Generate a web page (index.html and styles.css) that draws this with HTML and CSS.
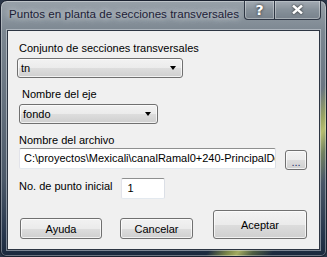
FILE: index.html
```html
<!DOCTYPE html>
<html lang="es">
<head>
    <meta charset="UTF-8">
    <title>Puntos en planta de secciones transversales</title>
    <link rel="stylesheet" href="styles.css">
</head>
<body>
    <div class="window">
        <div class="titlebar">
            <span class="title">Puntos en planta de secciones transversales</span>
            <div class="caption-btns">
                <span class="cap-btn help">?</span>
                <span class="cap-btn close">
                    <svg width="11" height="9" viewBox="0 0 11 9"><path d="M1 0.5 L10 8.5 M10 0.5 L1 8.5" stroke="#fff" stroke-width="2.4"/></svg>
                </span>
            </div>
        </div>

        <div class="client">
            <label class="lbl lbl-set">Conjunto de secciones transversales</label>
            <div class="combo combo-set">
                <span>tn</span>
                <span class="arrow"></span>
            </div>

            <label class="lbl lbl-axis">Nombre del eje</label>
            <div class="combo combo-axis">
                <span>fondo</span>
                <span class="arrow"></span>
            </div>

            <label class="lbl lbl-file">Nombre del archivo</label>
            <div class="file-row">
                <div class="field field-file">C:\proyectos\Mexicali\canalRamal0+240-PrincipalDe</div>
                <button class="btn btn-browse">...</button>
            </div>

            <div class="start-row">
                <label class="lbl lbl-start">No. de punto inicial</label>
                <div class="field field-start">1</div>
            </div>

            <div class="actions">
                <button class="btn btn-help">Ayuda</button>
                <button class="btn btn-cancel">Cancelar</button>
                <button class="btn btn-ok">Aceptar</button>
            </div>
        </div>
    </div>
</body>
</html>
```

FILE: styles.css
```css
* {
    margin: 0;
    padding: 0;
    box-sizing: border-box;
}

body {
    width: 327px;
    height: 257px;
    overflow: hidden;
    background: #2a3648;
    font-family: "Liberation Sans", Arial, sans-serif;
    font-size: 11px;
    color: #000;
}

.window {
    position: relative;
    width: 327px;
    height: 257px;
    border: 1px solid #1b2230;
    border-radius: 7px 7px 6px 6px;
    padding: 0 6px 6px 6px;
    display: flex;
    flex-direction: column;
    overflow: hidden;
    background:
        linear-gradient(125deg, transparent 0%, transparent 76%, rgba(200, 210, 80, 0.55) 80%, rgba(220, 225, 110, 0.7) 82%, rgba(170, 190, 70, 0.35) 85%, transparent 89%),
        linear-gradient(180deg, #98a1a9 0%, #7c8791 12%, #65717e 40%, #4b5868 70%, #26354b 92%, #1c2a3e 100%);
    box-shadow: inset 0 0 0 1px rgba(255, 255, 255, 0.35);
}

.titlebar {
    height: 28px;
    display: flex;
    align-items: flex-start;
    justify-content: space-between;
}

.title {
    margin-top: 6px;
    padding-left: 2px;
    font-size: 11.6px;
    color: #1c2036;
    white-space: nowrap;
    text-shadow: 0 0 6px rgba(230, 235, 240, 0.9), 0 0 10px rgba(230, 235, 240, 0.6);
}

.caption-btns {
    display: flex;
    margin-top: -1px;
    margin-right: -1px;
}

.cap-btn {
    height: 20px;
    display: flex;
    align-items: center;
    justify-content: center;
    border: 1px solid rgba(30, 38, 52, 0.85);
    border-top: none;
    background: linear-gradient(180deg, rgba(180, 188, 196, 0.45) 0%, rgba(120, 130, 140, 0.35) 50%, rgba(90, 100, 112, 0.35) 100%);
    box-shadow: inset 0 0 0 1px rgba(255, 255, 255, 0.35);
    color: #fff;
    font-family: "DejaVu Sans", sans-serif;
    font-weight: bold;
    font-size: 14px;
    text-shadow: 0 0 3px #222;
}

.help {
    width: 30px;
    border-radius: 0 0 0 4px;
    border-right: none;
}

.close {
    width: 47px;
    border-radius: 0 0 4px 0;
}

.close svg {
    filter: drop-shadow(0 0 1px #222);
}

.client {
    flex: 1;
    margin-top: 1px;
    background: #f0f0f0;
    border: 1px solid #2d3542;
    box-shadow: 0 0 0 1px rgba(220, 226, 232, 0.5);
    padding: 11px 0 0 0;
    display: flex;
    flex-direction: column;
    align-items: flex-start;
}

.lbl {
    display: block;
    line-height: 13px;
    white-space: nowrap;
}

.lbl-set {
    margin-left: 11px;
}

.combo {
    height: 20px;
    display: flex;
    align-items: center;
    justify-content: space-between;
    padding: 0 6px 0 3px;
    border: 1px solid #707070;
    border-radius: 3px;
    background: linear-gradient(180deg, #f2f2f2 0%, #ebebeb 50%, #dddddd 51%, #cfcfcf 100%);
    box-shadow: inset 0 0 0 1px rgba(255, 255, 255, 0.7);
}

.arrow {
    width: 0;
    height: 0;
    border-left: 3.5px solid transparent;
    border-right: 3.5px solid transparent;
    border-top: 4px solid #000;
}

.combo-set {
    width: 166px;
    margin: 3px 0 0 9px;
}

.lbl-axis {
    margin: 10px 0 0 14px;
}

.combo-axis {
    width: 139px;
    margin: 3px 0 0 11px;
}

.lbl-file {
    margin: 10px 0 0 11px;
}

.file-row {
    display: flex;
    align-items: flex-start;
    margin: 1px 0 0 11px;
}

.field {
    height: 21px;
    background: #fff;
    border: 1px solid #abadb3;
    border-top-color: #8e8f8f;
    border-left-color: #e2e3ea;
    border-right-color: #dbdfe6;
    border-bottom-color: #e3e9ef;
    border-radius: 2px;
    line-height: 19px;
    white-space: nowrap;
    overflow: hidden;
}

.field-file {
    width: 257px;
    padding-left: 4px;
}

.btn {
    font-family: "Liberation Sans", Arial, sans-serif;
    font-size: 11px;
    color: #000;
    border: 1px solid #707070;
    border-radius: 3px;
    background: linear-gradient(180deg, #f2f2f2 0%, #ebebeb 50%, #dddddd 51%, #cfcfcf 100%);
    box-shadow: inset 0 0 0 1px rgba(255, 255, 255, 0.7);
}

.btn-browse {
    width: 22px;
    height: 20px;
    margin: 2px 0 0 9px;
    line-height: 12px;
    padding-top: 4px;
    color: #23306a;
}

.start-row {
    display: flex;
    align-items: flex-start;
    margin: 8px 0 0 11px;
}

.lbl-start {
    padding-top: 2px;
}

.field-start {
    width: 44px;
    margin-left: 8px;
    padding-left: 6px;
}

.actions {
    display: flex;
    align-items: flex-end;
    margin: 11px 0 0 12px;
}

.btn-help {
    width: 82px;
    height: 21px;
}

.btn-cancel {
    width: 73px;
    height: 21px;
    margin-left: 18px;
}

.btn-ok {
    width: 94px;
    height: 29px;
    margin-left: 20px;
}
```
